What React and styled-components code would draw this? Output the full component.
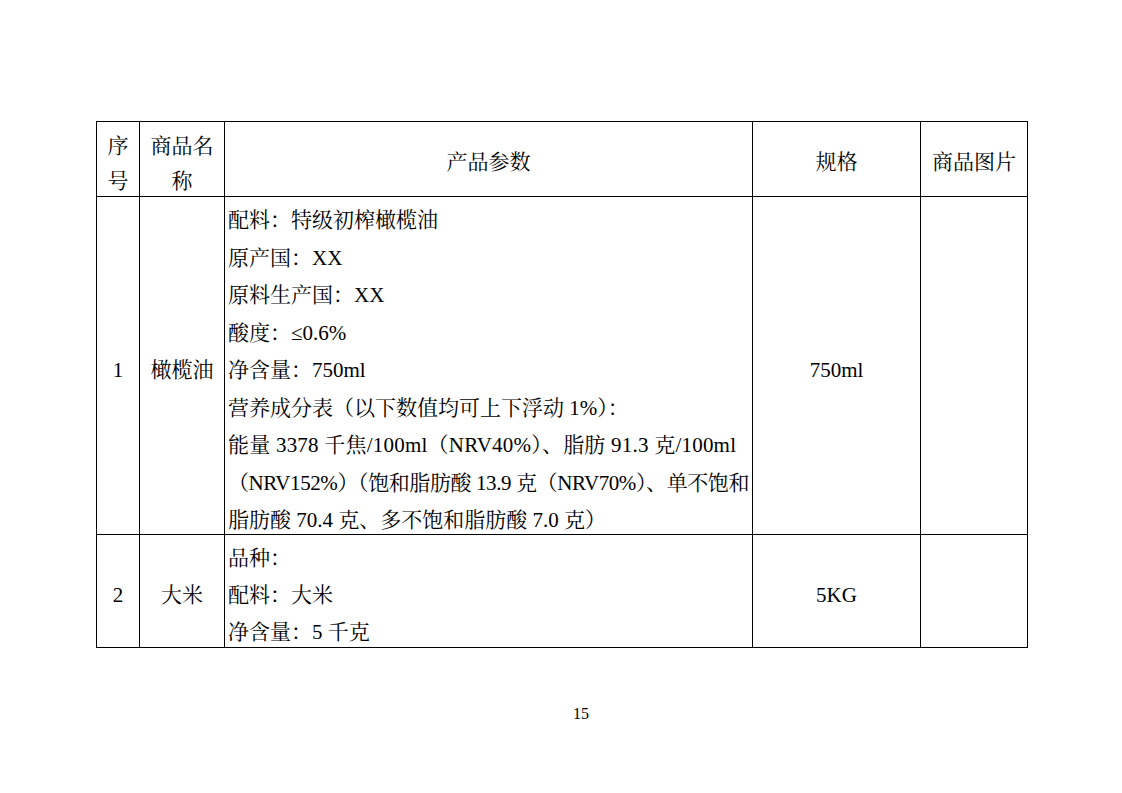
import React from 'react';
import styled, { createGlobalStyle } from 'styled-components';

const FONT = '"Liberation Serif", "Noto Serif CJK SC", "Noto Sans CJK SC", serif';

const GlobalStyle = createGlobalStyle`
  html, body {
    margin: 0;
    padding: 0;
    background: #ffffff;
  }
  body {
    font-family: ${FONT};
    color: #000000;
  }
`;

const products = [
  {
    no: '1',
    name: '橄榄油',
    spec: '750ml',
    lineHeight: 37.5,
    trim: 5.5,
    lines: [
      { text: '配料：特级初榨橄榄油' },
      { text: '原产国：XX' },
      { text: '原料生产国：XX' },
      { text: '酸度：≤0.6%' },
      { text: '净含量：750ml' },
      { text: '营养成分表（以下数值均可上下浮动 1%）：' },
      { text: '能量 3378 千焦/100ml（NRV40%）、脂肪 91.3 克/100ml', spacing: 0.22 },
      { text: '（NRV152%）（饱和脂肪酸 13.9 克（NRV70%）、单不饱和', spacing: -0.4 },
      { text: '脂肪酸 70.4 克、多不饱和脂肪酸 7.0 克）' },
    ],
  },
  {
    no: '2',
    name: '大米',
    spec: '5KG',
    lineHeight: 37,
    trim: 4,
    lines: [{ text: '品种：' }, { text: '配料：大米' }, { text: '净含量：5 千克' }],
  },
];

const App = () => {
  return (
    <>
      <GlobalStyle />
      <StPage>
        <StTable>
          <colgroup>
            <col style={{ width: 43 }} />
            <col style={{ width: 85 }} />
            <col style={{ width: 528 }} />
            <col style={{ width: 168 }} />
            <col style={{ width: 107 }} />
          </colgroup>
          <thead>
            <tr>
              <StHeadCell>
                <StHeadText>
                  序<br />号
                </StHeadText>
              </StHeadCell>
              <StHeadCell>
                <StHeadText>
                  商品名<br />称
                </StHeadText>
              </StHeadCell>
              <StHeadCell>产品参数</StHeadCell>
              <StHeadCell>规格</StHeadCell>
              <StHeadCell>商品图片</StHeadCell>
            </tr>
          </thead>
          <tbody>
            {products.map((p) => (
              <tr key={p.no}>
                <StCell>{p.no}</StCell>
                <StCell>{p.name}</StCell>
                <StParamCell>
                  <StLines $trim={p.trim}>
                    {p.lines.map((line) => (
                      <StLine key={line.text} $lh={p.lineHeight} $spacing={line.spacing || 0}>
                        {line.text}
                      </StLine>
                    ))}
                  </StLines>
                </StParamCell>
                <StCell>{p.spec}</StCell>
                <StCell></StCell>
              </tr>
            ))}
          </tbody>
        </StTable>
        <StPageNumber>15</StPageNumber>
      </StPage>
    </>
  );
};

export default App;

const StPage = styled.div`
  width: 1122px;
  height: 793px;
  box-sizing: border-box;
  padding: 121px 0 0 96px;
  overflow: hidden;
  font-family: ${FONT};
`;

const StTable = styled.table`
  width: 931px;
  border-collapse: collapse;
  table-layout: fixed;
  font-family: ${FONT};
  font-size: 21px;
  color: #000;
`;

const StHeadCell = styled.th`
  border: 1px solid #000;
  padding: 7px 0 0;
  height: 74px;
  box-sizing: border-box;
  font-weight: 400;
  line-height: 35px;
  text-align: center;
  vertical-align: middle;
`;

const StHeadText = styled.div`
  margin-bottom: -3px;
`;

const StCell = styled.td`
  border: 1px solid #000;
  padding: 8px 0 0;
  text-align: center;
  vertical-align: middle;
  line-height: 30px;
`;

const StParamCell = styled.td`
  border: 1px solid #000;
  padding: 5px 0 0 3px;
  text-align: left;
  vertical-align: top;
`;

const StLines = styled.div`
  margin-bottom: -${(p) => p.$trim}px;
`;

const StLine = styled.div`
  line-height: ${(p) => p.$lh}px;
  letter-spacing: ${(p) => p.$spacing}px;
  white-space: nowrap;
`;

const StPageNumber = styled.div`
  width: 970px;
  margin-top: 57px;
  text-align: center;
  font-size: 16px;
`;
